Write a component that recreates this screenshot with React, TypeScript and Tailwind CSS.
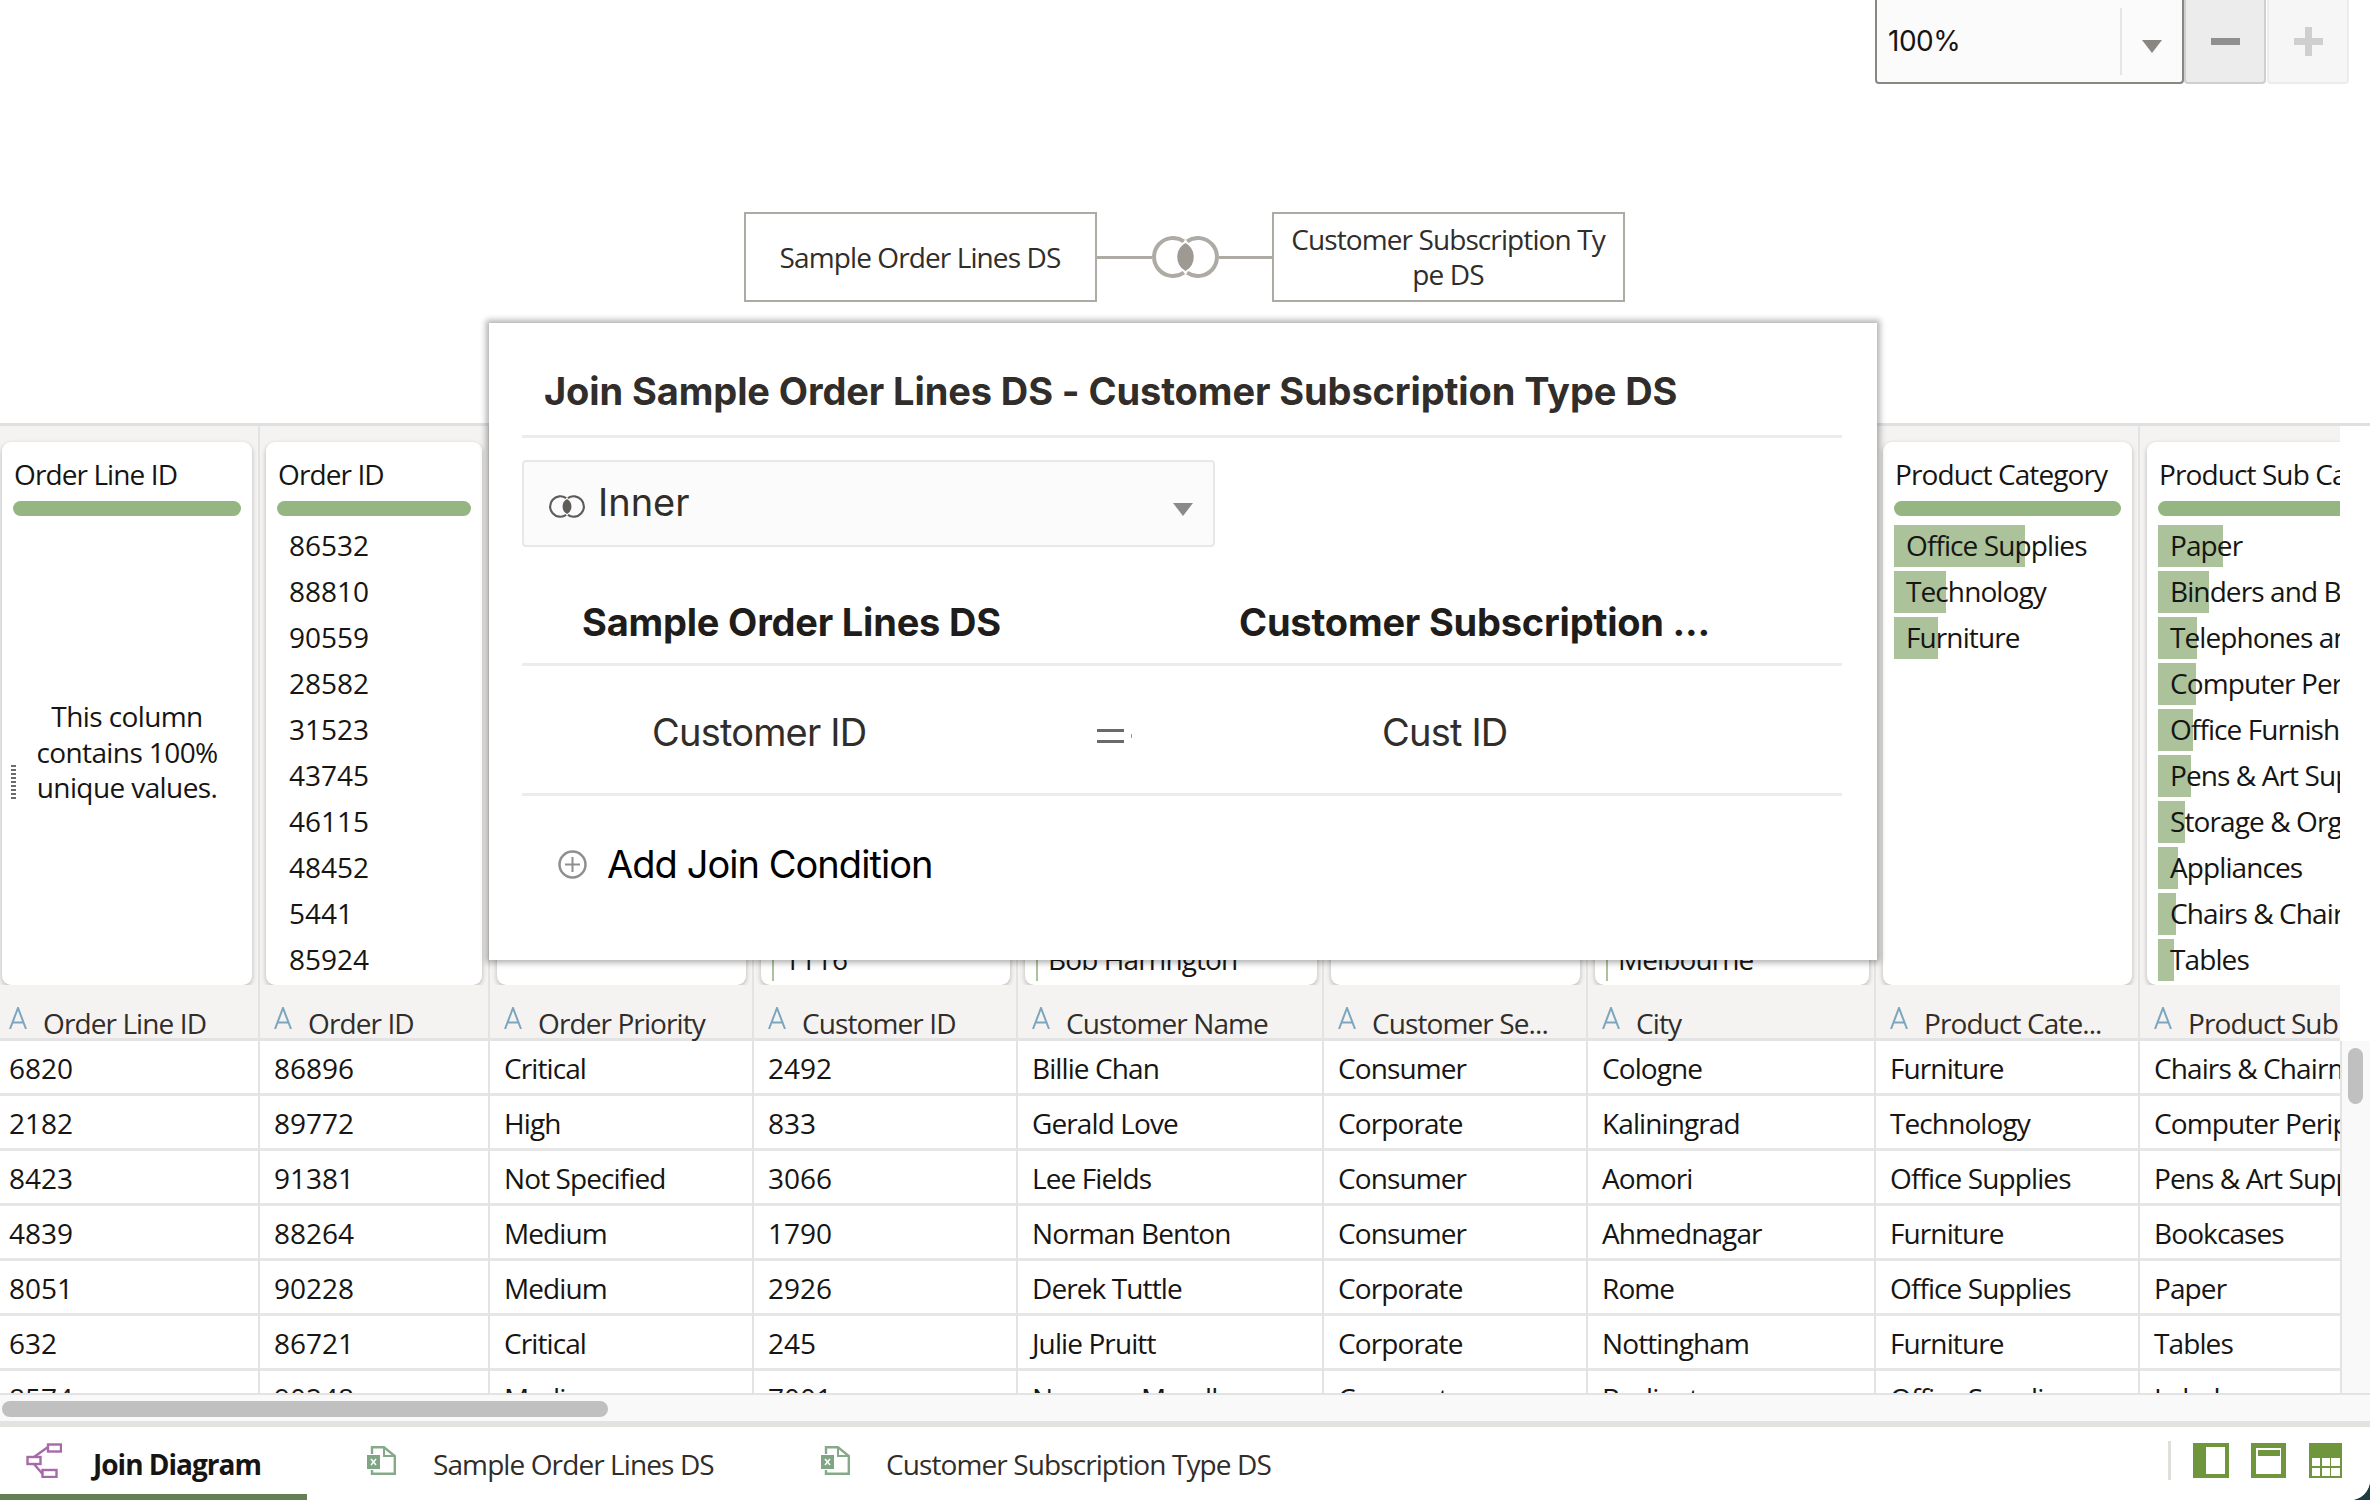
const sans = "font-['Open_Sans',sans-serif]";

type Col = {
    width: string;
    title: string;
    head: string;
    pad: string;
    cardPad: string;
    rows: string[];
    summary: { label: string; bar: number }[];
    note?: boolean;
};

const columns: Col[] = [
    {
        width: 'w-[260px]',
        title: 'Order Line ID',
        head: 'Order Line ID',
        pad: 'pl-[9px]',
        cardPad: 'pl-[2px] pr-[6px]',
        note: true,
        summary: [],
        rows: ['6820', '2182', '8423', '4839', '8051', '632', '8574'],
    },
    {
        width: 'w-[230px]',
        title: 'Order ID',
        head: 'Order ID',
        pad: 'pl-[14px]',
        cardPad: 'pl-[6px] pr-[6px]',
        summary: ['86532', '88810', '90559', '28582', '31523', '43745', '46115', '48452', '5441', '85924'].map((label) => ({ label, bar: 0 })),
        rows: ['86896', '89772', '91381', '88264', '90228', '86721', '90248'],
    },
    {
        width: 'w-[264px]',
        title: 'Order Priority',
        head: 'Order Priority',
        pad: 'pl-[14px]',
        cardPad: 'pl-[7px] pr-[6px]',
        summary: [],
        rows: ['Critical', 'High', 'Not Specified', 'Medium', 'Medium', 'Critical', 'Medium'],
    },
    {
        width: 'w-[264px]',
        title: 'Customer ID',
        head: 'Customer ID',
        pad: 'pl-[14px]',
        cardPad: 'pl-[7px] pr-[6px]',
        summary: [
            ...Array.from({ length: 9 }, () => ({ label: '', bar: 0 })),
            { label: '1116', bar: 2 },
        ],
        rows: ['2492', '833', '3066', '1790', '2926', '245', '7001'],
    },
    {
        width: 'w-[306px]',
        title: 'Customer Name',
        head: 'Customer Name',
        pad: 'pl-[14px]',
        cardPad: 'pl-[7px] pr-[5px]',
        summary: [
            ...Array.from({ length: 9 }, () => ({ label: '', bar: 0 })),
            { label: 'Bob Harrington', bar: 2 },
        ],
        rows: ['Billie Chan', 'Gerald Love', 'Lee Fields', 'Norman Benton', 'Derek Tuttle', 'Julie Pruitt', 'Norman Mccall'],
    },
    {
        width: 'w-[264px]',
        title: 'Customer Segment',
        head: 'Customer Se...',
        pad: 'pl-[14px]',
        cardPad: 'pl-[7px] pr-[6px]',
        summary: [],
        rows: ['Consumer', 'Corporate', 'Consumer', 'Consumer', 'Corporate', 'Corporate', 'Corporate'],
    },
    {
        width: 'w-[288px]',
        title: 'City',
        head: 'City',
        pad: 'pl-[14px]',
        cardPad: 'pl-[7px] pr-[5px]',
        summary: [
            ...Array.from({ length: 9 }, () => ({ label: '', bar: 0 })),
            { label: 'Melbourne', bar: 2 },
        ],
        rows: ['Cologne', 'Kaliningrad', 'Aomori', 'Ahmednagar', 'Rome', 'Nottingham', 'Burlington'],
    },
    {
        width: 'w-[264px]',
        title: 'Product Category',
        head: 'Product Cate...',
        pad: 'pl-[14px]',
        cardPad: 'pl-[7px] pr-[6px]',
        summary: [
            { label: 'Office Supplies', bar: 131 },
            { label: 'Technology', bar: 52 },
            { label: 'Furniture', bar: 44 },
        ],
        rows: ['Furniture', 'Technology', 'Office Supplies', 'Furniture', 'Office Supplies', 'Furniture', 'Office Supplies'],
    },
    {
        width: 'w-[200px]',
        title: 'Product Sub Category',
        head: 'Product Sub Category',
        pad: 'pl-[14px]',
        cardPad: 'pl-[7px] w-[256px]',
        summary: [
            { label: 'Paper', bar: 65 },
            { label: 'Binders and Binder Accessories', bar: 51 },
            { label: 'Telephones and Communication', bar: 39 },
            { label: 'Computer Peripherals', bar: 38 },
            { label: 'Office Furnishings', bar: 35 },
            { label: 'Pens & Art Supplies', bar: 33 },
            { label: 'Storage & Organization', bar: 27 },
            { label: 'Appliances', bar: 20 },
            { label: 'Chairs & Chairmats', bar: 18 },
            { label: 'Tables', bar: 16 },
        ],
        rows: ['Chairs & Chairmats', 'Computer Peripherals', 'Pens & Art Supplies', 'Bookcases', 'Paper', 'Tables', 'Labels'],
    },
];

// digits keep their width, the letters run a bit narrower than Open Sans
const track = (text: string) => (/^\d+$/.test(text) ? '' : 'tracking-[-0.9px]');

const JoinIcon = ({ className, color, lens }: { className: string; color: string; lens: string }) => (
    <svg viewBox="0 0 67 42" className={className} fill="none">
        <path d="M31.9 5.4A19 19 0 1 0 31.9 36.6" stroke={color} strokeWidth="4" />
        <path d="M35.1 5.4A19 19 0 1 1 35.1 36.6" stroke={color} strokeWidth="4" />
        <path d="M33.5 7A16 16 0 0 1 33.5 35A16 16 0 0 1 33.5 7Z" fill={lens} />
    </svg>
);

const TypeA = () => (
    <svg viewBox="0 0 18 22" className="w-[18px] h-[22px] shrink-0 mb-[8px]" fill="none" stroke="#7ba6bd" strokeWidth="2">
        <path d="M1 22 9 1 17 22M3.5 15.5h11" />
    </svg>
);

const SheetIcon = () => (
    <svg viewBox="0 0 29 29" className="w-[29px] h-[29px] shrink-0" fill="none">
        <path d="M5 8V1.2H17L27.8 10V27.8H5V24" stroke="#86a989" strokeWidth="2.4" />
        <path d="M17 1.2V10H27.8" stroke="#86a989" strokeWidth="2" />
        <rect x="0" y="9" width="13" height="14" fill="#7fa584" />
        <path d="M4 13 9 19M9 13 4 19" stroke="#fff" strokeWidth="1.5" />
    </svg>
);

const Card = ({ col }: { col: Col }) => (
    <div className={`${col.cardPad} pt-[16px] h-[559px] overflow-hidden shrink-0`}>
        <div className="relative h-[543px] bg-white rounded-[9px] shadow-[0_2px_5px_rgba(0,0,0,0.25)] overflow-hidden pt-[18px]">
            <div className="pl-[12px] text-[28px] leading-[28px] tracking-[-0.9px] text-[#161513] whitespace-nowrap">{col.title}</div>
            <div className="mx-[11px] mt-[13px] h-[15px] rounded-full bg-[#95b583]" />
            {col.note ? (
                <>
                    <div className="mt-[183px] text-center text-[28px] leading-[35.5px] tracking-[-0.6px] text-[#161513] px-[16px]">
                        This column contains 100% unique values.
                    </div>
                    <div className="absolute left-[9px] top-[323px] w-[5px] h-[34px] bg-[repeating-linear-gradient(to_bottom,#6b6b6b_0,#6b6b6b_2px,transparent_2px,transparent_4px)]" />
                </>
            ) : (
                <div className="mt-[9px] flex flex-col gap-[4px]">
                    {col.summary.map((s, i) => (
                        <div key={i} className="relative h-[42px] ml-[11px] flex items-center whitespace-nowrap">
                            {s.bar > 0 && (
                                <div className="absolute left-0 top-0 bottom-0 bg-[#abc29a]" style={{ width: s.bar }} />
                            )}
                            <span className={`relative pl-[12px] -mt-[2px] text-[28px] text-[#161513] ${track(s.label)}`}>{s.label}</span>
                        </div>
                    ))}
                </div>
            )}
        </div>
    </div>
);

const Column = ({ col }: { col: Col }) => (
    <div className={`${col.width} shrink-0 overflow-hidden border-r-2 border-[#e3e3e3] last:border-r-0`}>
        <div className="h-[615px] bg-[#f4f3f1] border-b-[3px] border-[#e3e3e3]">
            <Card col={col} />
            <div className={`${col.pad} flex items-end gap-[16px] h-[52px] text-[28px] leading-[28px] tracking-[-0.9px] text-[#312d2a] whitespace-nowrap`}>
                <TypeA />
                <span>{col.head}</span>
            </div>
        </div>
        {col.rows.map((r, i) => (
            <div
                key={i}
                className={`${col.pad} h-[55px] pt-[1px] flex items-center text-[28px] text-[#161513] whitespace-nowrap border-b-[3px] border-[#e6e6e6] ${track(r)}`}
            >
                {r}
            </div>
        ))}
    </div>
);

export default function App() {
    return (
        <div className={`w-[2370px] h-[1500px] overflow-hidden bg-[#1f3a45] ${sans}`}>
            <div className="relative w-full h-full bg-white rounded-br-[20px] overflow-hidden flex flex-col">
                <div className="h-[423px] shrink-0">
                    <div className="flex justify-end pr-[21px] h-[84px]">
                        <div className="w-[309px] h-[84px] bg-[#fbfbfb] border-x-2 border-b-2 border-[#8a8681] rounded-b-[4px] flex items-center">
                            <span className="pl-[11px] flex-1 text-[28px] text-[#161513] font-['Inter',sans-serif] tracking-[-0.5px]">100%</span>
                            <div className="w-[2px] h-[67px] bg-[#e6e6e6]" />
                            <div className="w-[60px] flex justify-center">
                                <div className="w-0 h-0 mt-[10px] border-x-[10px] border-x-transparent border-t-[13px] border-t-[#8a8681]" />
                            </div>
                        </div>
                        <div className="w-[82px] h-[84px] bg-[#ececec] border-x-2 border-b-2 border-[#cfcfcf] rounded-b-[4px] flex items-center justify-center">
                            <div className="w-[29px] h-[7px] bg-[#8f8f8f]" />
                        </div>
                        <div className="w-[82px] h-[84px] ml-[1px] bg-[#f6f6f6] border-x-2 border-b-2 border-[#ececec] rounded-b-[4px] flex items-center justify-center">
                            <svg viewBox="0 0 29 29" className="w-[29px] h-[29px]" fill="#cfcfcf">
                                <path d="M11 0h7v11h11v7H18v11h-7V18H0v-7h11z" />
                            </svg>
                        </div>
                    </div>
                    <div className="flex justify-center items-center mt-[128px] pr-[2px] text-[28px] tracking-[-0.9px] text-[#312d2a]">
                        <div className="w-[353px] h-[90px] border-2 border-[#aeaaa4] flex items-center justify-center">
                            Sample Order Lines DS
                        </div>
                        <div className="w-[55px] h-[3px] bg-[#aeaaa4]" />
                        <JoinIcon className="w-[67px] h-[42px]" color="#aeaaa4" lens="#9e9a93" />
                        <div className="w-[53px] h-[3px] bg-[#aeaaa4]" />
                        <div className="w-[353px] h-[90px] border-2 border-[#aeaaa4] flex items-center justify-center text-center px-[12px] leading-[35px] break-all">
                            Customer Subscription Type DS
                        </div>
                    </div>
                </div>

                <div className="h-[3px] shrink-0 bg-[#e0e0e0]" />

                <div className="flex h-[967px] overflow-hidden shrink-0">
                    <div className="w-[2340px] shrink-0 flex flex-col overflow-hidden">
                        <div className="flex h-[967px] shrink-0 overflow-hidden">
                            {columns.map((c) => (
                                <Column key={c.title} col={c} />
                            ))}
                        </div>
                    </div>
                    <div className="flex-1 flex flex-col pt-[615px]">
                        <div className="flex-1 bg-[#f9f9f9] border-l-2 border-[#e3e3e3] pl-[6px] pt-[7px]">
                            <div className="w-[15px] h-[56px] rounded-full bg-[#c0c0c0]" />
                        </div>
                    </div>
                </div>

                <div className="absolute left-0 top-[1393px] w-full h-[28px] bg-[#f9f9f9] border-t-2 border-[#e3e3e3] pt-[6px] pl-[2px]">
                    <div className="w-[606px] h-[16px] rounded-full bg-[#c0c0c0]" />
                </div>

                <div className="absolute left-0 bottom-0 w-full h-[79px] bg-white border-t-[6px] border-[#e3e3df] flex items-center text-[28px] tracking-[-0.9px] text-[#312d2a]">
                    <div className="relative w-[307px] h-full flex items-center pl-[26px] gap-[31px]">
                        <svg viewBox="0 0 36 35" className="w-[36px] h-[35px] -mt-[6px]" fill="none" stroke="#a56ba8" strokeWidth="2.4">
                            <rect x="22" y="1.5" width="13" height="7" />
                            <rect x="1.5" y="14" width="13" height="7" />
                            <rect x="16.5" y="27" width="14" height="7" />
                            <path d="M8 14 22 4M8 21 16.5 31" />
                        </svg>
                        <span className="font-bold text-[#161513] mt-[1px] tracking-[-1px]">Join Diagram</span>
                        <div className="absolute left-0 bottom-0 w-full h-[6px] bg-[#677f57]" />
                    </div>
                    <div className="w-[454px] flex items-center gap-[37px] ml-[60px] -mt-[6px]">
                        <SheetIcon />
                        <span className="mt-[7px]">Sample Order Lines DS</span>
                    </div>
                    <div className="flex items-center gap-[36px] -mt-[6px]">
                        <SheetIcon />
                        <span className="mt-[7px]">Customer Subscription Type DS</span>
                    </div>
                    <div className="ml-auto flex items-center pr-[28px] -mt-[6px]">
                        <div className="w-[3px] h-[39px] bg-[#e0e0db] mr-[22px]" />
                        <svg viewBox="0 0 36 35" className="w-[36px] h-[35px] mr-[22px]">
                            <rect width="36" height="35" fill="#6f963d" />
                            <rect x="13" y="4" width="19" height="27" fill="#fff" />
                        </svg>
                        <svg viewBox="0 0 35 35" className="w-[35px] h-[35px] mr-[23px]">
                            <rect width="35" height="35" fill="#6f963d" />
                            <rect x="5" y="5" width="25" height="26" fill="#fff" />
                            <rect x="7" y="7" width="22" height="6" fill="#6f963d" />
                        </svg>
                        <svg viewBox="0 0 33 35" className="w-[33px] h-[35px]">
                            <rect width="33" height="35" fill="#6f963d" />
                            <path d="M3 15h8v8H3zM13 15h8v8h-8zM22 15h9v8h-9zM3 25h8v8H3zM13 25h8v8h-8zM22 25h9v8h-9z" fill="#fff" />
                        </svg>
                    </div>
                </div>

                <div className="absolute left-[489px] top-[323px] w-[1388px] h-[637px] bg-white shadow-[0_0_6px_3px_rgba(0,0,0,0.3)] pl-[33px] pr-[35px] font-['Inter',sans-serif]">
                    <div className="h-[115px] flex items-center pl-[22px] pt-[24px] border-b-[3px] border-[#ececec] text-[38px] font-bold tracking-[-0.1px] text-[#312d2a] whitespace-nowrap">
                        Join Sample Order Lines DS - Customer Subscription Type DS
                    </div>
                    <div className="mt-[22px] w-[693px] h-[87px] bg-[#fbfbfb] border-2 border-[#e8e8e8] rounded-[4px] flex items-center pl-[25px] pr-[20px]">
                        <JoinIcon className="w-[36px] h-[23px] mt-[6px]" color="#5e5c58" lens="#5e5c58" />
                        <span className="ml-[13px] text-[38px] text-[#312d2a] -mt-[2px]">Inner</span>
                        <div className="ml-auto w-0 h-0 mt-[12px] border-x-[10px] border-x-transparent border-t-[13px] border-t-[#8a8a8a]" />
                    </div>
                    <div className="mt-[23px] h-[96px] pt-[12px] flex items-center border-b-[3px] border-[#ececec] text-[38px] font-bold tracking-[-0.2px] text-[#1f1d1b] whitespace-nowrap">
                        <span className="pl-[60px] w-[717px]">Sample Order Lines DS</span>
                        <span>Customer Subscription ...</span>
                    </div>
                    <div className="h-[130px] pt-[6px] flex items-center border-b-[3px] border-[#ececec] text-[38px] tracking-[-0.8px] text-[#312d2a] whitespace-nowrap">
                        <span className="pl-[130px] w-[575px]">Customer ID</span>
                        <div className="flex items-center gap-[7px] mt-[6px]">
                            <div className="w-[27px] h-[14px] border-y-[3px] border-[#6a6a6a]" />
                            <div className="w-[1px] h-[4px] bg-[#9a9a9a]" />
                        </div>
                        <span className="ml-[250px]">Cust ID</span>
                    </div>
                    <div className="h-[90px] mt-[23px] flex items-center pl-[36px] gap-[20px] text-[38px] tracking-[-0.95px] text-[#000]">
                        <svg viewBox="0 0 29 29" className="w-[29px] h-[29px]" fill="none" stroke="#8f8f8f">
                            <circle cx="14.5" cy="14.5" r="13" strokeWidth="2.5" />
                            <path d="M14.5 7v15M7 14.5h15" strokeWidth="2" />
                        </svg>
                        <span>Add Join Condition</span>
                    </div>
                </div>
            </div>
        </div>
    );
}
